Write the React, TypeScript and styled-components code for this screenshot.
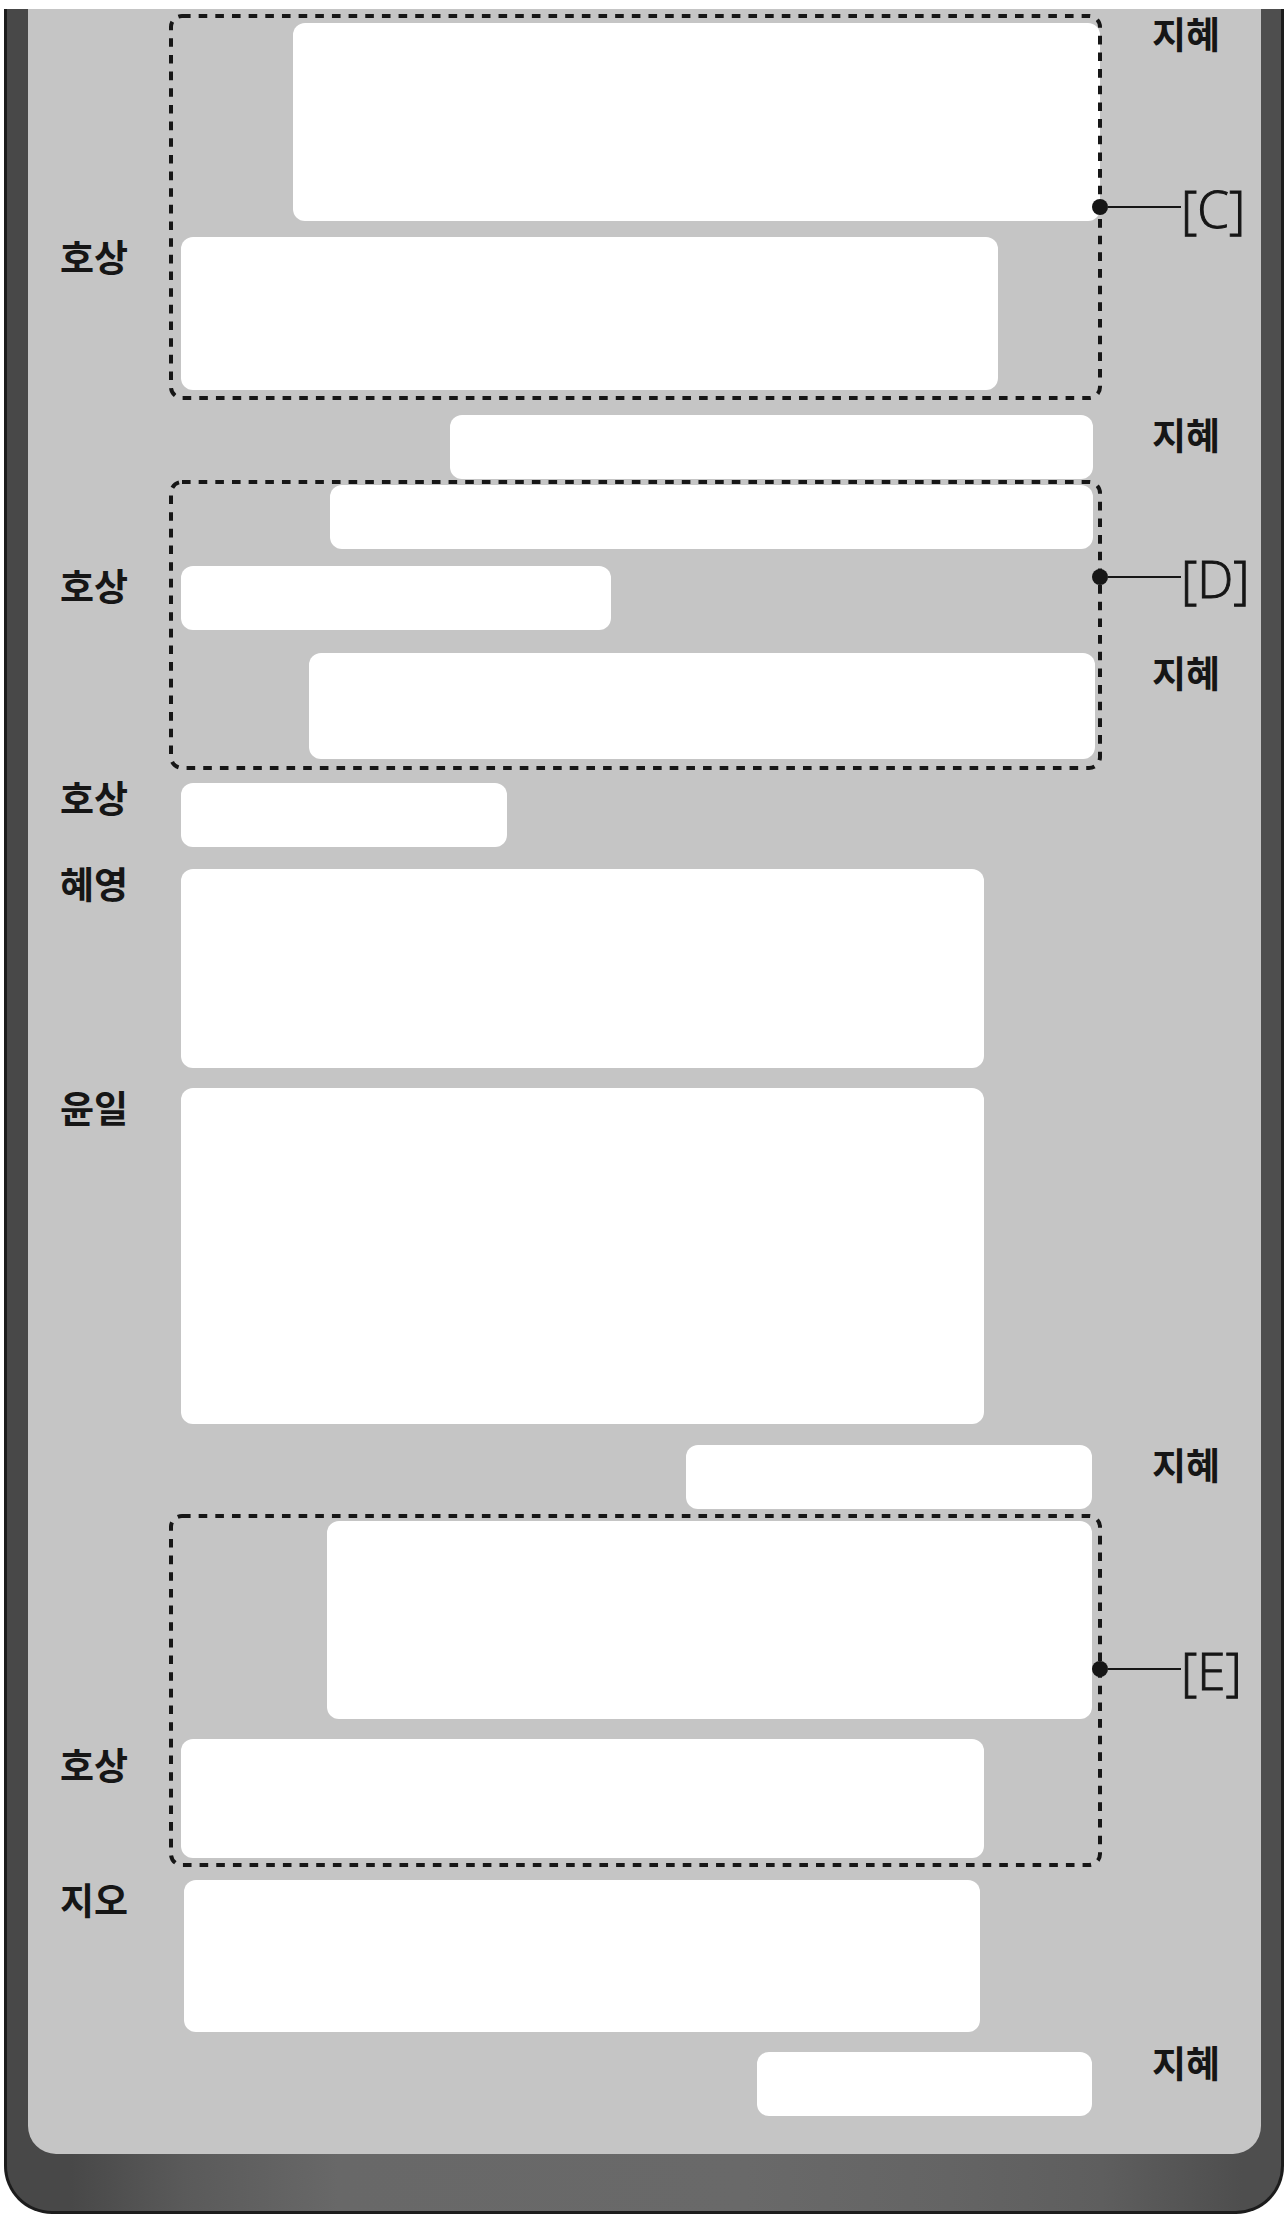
import React from 'react';
import styled, { createGlobalStyle } from 'styled-components';

const INK = '#161616';

const GlobalStyle = createGlobalStyle`
  * { box-sizing: border-box; }
  body { margin: 0; background: #fff; }
`;

const Device = styled.main`
  margin: 9px 3px 6px 4px;
  padding: 0 20px 57px 21px;
  border: 3px solid #1c1c1c;
  border-top: 0;
  border-radius: 0 0 48px 48px;
  background: linear-gradient(
    90deg,
    #484848 0%,
    #484848 5%,
    #5a5a5a 14%,
    #686868 26%,
    #696969 58%,
    #646464 74%,
    #5e5e5e 86%,
    #4e4e4e 97%,
    #4e4e4e 100%
  );
`;

const Screen = styled.section`
  display: flow-root;
  padding-bottom: 38px;
  border-radius: 0 0 28px 28px;
  background: #c5c5c5;
`;

const Row = styled.div<{ $gap: number }>`
  display: grid;
  grid-template-columns: 141px minmax(0, 1fr) 159px;
  align-items: start;
  margin-top: ${(p) => p.$gap}px;
`;

const nameShift = { high: -9, mid: -5, base: 0, low: 6 };
type Shift = keyof typeof nameShift;

const Name = styled.span<{ $side: 'left' | 'right'; $shift: Shift }>`
  grid-row: 1;
  grid-column: ${(p) => (p.$side === 'left' ? 1 : 3)};
  margin-top: ${(p) => nameShift[p.$shift]}px;
  padding-left: ${(p) => (p.$side === 'left' ? 32 : 50)}px;
  color: ${INK};
  font: 700 37px/38px 'Noto Sans CJK KR', sans-serif;
  white-space: nowrap;
`;

const Bubble = styled.div<{ $start: number; $end: number; $height: number }>`
  grid-row: 1;
  grid-column: 2;
  min-height: ${(p) => p.$height}px;
  margin: 0 ${(p) => p.$end}px 0 ${(p) => p.$start}px;
  border-radius: 12px;
  background: #fff;
`;

const GroupBox = styled.section<{ $gap: number; $top: number; $bottom: number }>`
  position: relative;
  display: flow-root;
  margin-top: ${(p) => p.$gap}px;
  padding: ${(p) => p.$top}px 0 ${(p) => p.$bottom}px;
`;

const Outline = styled.svg`
  position: absolute;
  top: 0;
  left: 141px;
  width: calc(100% - 300px);
  height: 100%;
  overflow: visible;
  pointer-events: none;

  rect {
    width: calc(100% - 4px);
    height: calc(100% - 4px);
    fill: none;
    stroke: ${INK};
    stroke-width: 4px;
  }
`;

const Callout = styled.div<{ $top: number }>`
  position: absolute;
  top: ${(p) => p.$top}px;
  right: 0;
  display: flex;
  align-items: center;
  width: 169px;
  height: 16px;
`;

const Dot = styled.span`
  width: 16px;
  height: 16px;
  border-radius: 50%;
  background: ${INK};
`;

const Leader = styled.span`
  width: 73px;
  height: 2px;
  background: ${INK};
`;

const Tag = styled.span`
  padding-top: 2px;
  color: ${INK};
  font: 300 51px/52px 'Open Sans', 'Noto Sans', sans-serif;
  -webkit-text-stroke: 1px ${INK};
  white-space: nowrap;
`;

type MessageProps = {
  name?: string;
  side?: 'left' | 'right';
  shift?: Shift;
  gap?: number;
  start?: number;
  end?: number;
  height: number;
};

function Message({ name, side = 'left', shift = 'base', gap = 0, start = 12, end = 10, height }: MessageProps) {
  return (
    <Row $gap={gap}>
      {name && (
        <Name $side={side} $shift={shift}>
          {name}
        </Name>
      )}
      <Bubble $start={start} $end={end} $height={height} />
    </Row>
  );
}

type GroupProps = {
  label: string;
  gap: number;
  top: number;
  bottom: number;
  calloutTop: number;
  children: React.ReactNode;
};

function Group({ label, gap, top, bottom, calloutTop, children }: GroupProps) {
  return (
    <GroupBox $gap={gap} $top={top} $bottom={bottom}>
      {children}
      <Outline aria-hidden="true">
        <rect x="2" y="2" rx="11" strokeDasharray="8.6 8.06" />
      </Outline>
      <Callout $top={calloutTop}>
        <Dot />
        <Leader />
        <Tag>{label}</Tag>
      </Callout>
    </GroupBox>
  );
}

export default function App() {
  return (
    <>
      <GlobalStyle />
      <Device>
        <Screen>
          <Group label="[C]" gap={5} top={9} bottom={10} calloutTop={185}>
            <Message name="지혜" side="right" shift="high" start={124} end={2} height={198} />
            <Message name="호상" gap={16} end={104} height={153} />
          </Group>
          <Message name="지혜" side="right" gap={15} start={281} end={9} height={64} />
          <Group label="[D]" gap={1} top={5} bottom={11} calloutTop={89}>
            <Message start={161} end={9} height={64} />
            <Message name="호상" gap={17} end={491} height={64} />
            <Message name="지혜" side="right" gap={23} start={140} end={7} height={106} />
          </Group>
          <Message name="호상" shift="mid" gap={13} end={595} height={64} />
          <Message name="혜영" shift="mid" gap={22} end={118} height={199} />
          <Message name="윤일" gap={20} end={118} height={336} />
          <Message name="지혜" side="right" gap={21} start={517} height={64} />
          <Group label="[E]" gap={5} top={7} bottom={9} calloutTop={147}>
            <Message start={158} height={198} />
            <Message name="호상" shift="low" gap={20} end={118} height={119} />
          </Group>
          <Message name="지오" gap={13} start={15} end={122} height={152} />
          <Message name="지혜" side="right" shift="high" gap={20} start={588} height={64} />
        </Screen>
      </Device>
    </>
  );
}
